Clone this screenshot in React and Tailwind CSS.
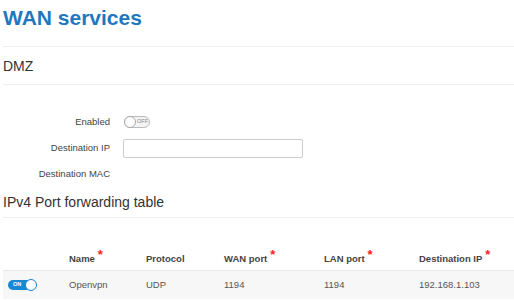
export default function App() {
  const star = <span className="absolute -top-[5px] -right-[8px] text-[13px] leading-none text-[#ff1a1a]">*</span>;
  return (
    <div className="w-[514px] h-[300px] overflow-hidden bg-white pl-[3px] text-[#333]" style={{ fontFamily: '"Liberation Sans", Arial, sans-serif' }}>
      <div className="h-[46px] flex items-start pt-[6px]">
        <h1 className="text-[21px] font-bold text-[#1f77c0] leading-[24px]">WAN services</h1>
      </div>
      <div className="border-t border-[#eeeeee] h-[38px] flex items-center">
        <h2 className="text-[14px] text-[#333] leading-none pt-[1px]">DMZ</h2>
      </div>
      <div className="border-t border-[#eeeeee] pt-[27px]">
        <div className="flex items-center h-[20px]">
          <div className="w-[107px] text-right text-[9.5px] text-[#444]">Enabled</div>
          <div className="ml-[14px] relative w-[26px] h-[12px] rounded-full border border-[#bbb] bg-[#f3f3f3] flex items-center">
            <div className="absolute left-[-1px] top-[-1px] w-[12px] h-[12px] rounded-full bg-white border border-[#aaa]"></div>
            <span className="ml-[12px] text-[5.5px] text-[#888] leading-none">OFF</span>
          </div>
        </div>
        <div className="flex items-center mt-[7px] h-[19px]">
          <div className="w-[107px] text-right text-[9.5px] text-[#444]">Destination IP</div>
          <div className="ml-[13px] w-[180px] h-[19px] border border-[#ccc] rounded-[2px] bg-white"></div>
        </div>
        <div className="flex items-center mt-[7px] h-[19px]">
          <div className="w-[107px] text-right text-[9.5px] text-[#444]">Destination MAC</div>
        </div>
      </div>
      <div className="h-[33px] flex items-center pt-[2px]">
        <h2 className="text-[14px] text-[#333] leading-none">IPv4 Port forwarding table</h2>
      </div>
      <div className="border-t border-[#eeeeee] pt-[30px]">
        <div className="flex items-center h-[23px] text-[9.5px] font-bold text-[#444] border-b border-[#e8e8e8]">
          <div className="w-[66px]"></div>
          <div className="w-[77px]"><span className="relative">Name{star}</span></div>
          <div className="w-[78px]">Protocol</div>
          <div className="w-[100px]"><span className="relative">WAN port{star}</span></div>
          <div className="w-[95px]"><span className="relative">LAN port{star}</span></div>
          <div><span className="relative">Destination IP{star}</span></div>
        </div>
        <div className="flex items-center h-[28px] text-[9.5px] text-[#555] bg-[#f7f7f7]">
          <div className="w-[66px] pl-[5px]">
            <div className="relative w-[28px] h-[10px] rounded-full bg-[#1787d6] flex items-center">
              <span className="ml-[5px] text-[5.5px] text-white font-bold leading-none">ON</span>
              <div className="absolute right-[-1px] top-[-1px] w-[12px] h-[12px] rounded-full bg-white border border-[#1787d6]"></div>
            </div>
          </div>
          <div className="w-[77px]">Openvpn</div>
          <div className="w-[78px]">UDP</div>
          <div className="w-[100px]">1194</div>
          <div className="w-[95px]">1194</div>
          <div>192.168.1.103</div>
        </div>
      </div>
    </div>
  );
}
